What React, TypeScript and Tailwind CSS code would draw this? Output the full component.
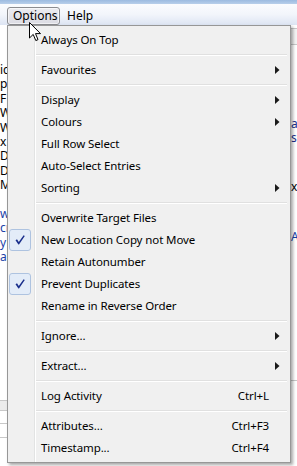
import React from "react";

type Item =
  | { kind: "sep" }
  | { kind: "item"; label: string; checked?: boolean; sub?: boolean; shortcut?: string };

const items: Item[] = [
  { kind: "item", label: "Always On Top" },
  { kind: "sep" },
  { kind: "item", label: "Favourites", sub: true },
  { kind: "sep" },
  { kind: "item", label: "Display", sub: true },
  { kind: "item", label: "Colours", sub: true },
  { kind: "item", label: "Full Row Select" },
  { kind: "item", label: "Auto-Select Entries" },
  { kind: "item", label: "Sorting", sub: true },
  { kind: "sep" },
  { kind: "item", label: "Overwrite Target Files" },
  { kind: "item", label: "New Location Copy not Move", checked: true },
  { kind: "item", label: "Retain Autonumber" },
  { kind: "item", label: "Prevent Duplicates", checked: true },
  { kind: "item", label: "Rename in Reverse Order" },
  { kind: "sep" },
  { kind: "item", label: "Ignore...", sub: true },
  { kind: "sep" },
  { kind: "item", label: "Extract...", sub: true },
  { kind: "sep" },
  { kind: "item", label: "Log Activity", shortcut: "Ctrl+L" },
  { kind: "sep" },
  { kind: "item", label: "Attributes...", shortcut: "Ctrl+F3" },
  { kind: "item", label: "Timestamp...", shortcut: "Ctrl+F4" },
];

// slivers of the file list peeking out left of the menu
const leftLines = [
  { t: "ic", c: "text-black" },
  { t: "p", c: "text-black" },
  { t: "F", c: "text-black" },
  { t: "W", c: "text-black" },
  { t: "W", c: "text-black" },
  { t: "x", c: "text-black" },
  { t: "D", c: "text-black" },
  { t: "D", c: "text-black" },
  { t: "M", c: "text-black" },
  { t: "", c: "text-black" },
  { t: "w", c: "text-[#1a3fa8]" },
  { t: "cr", c: "text-[#1a3fa8]" },
  { t: "y", c: "text-[#1a3fa8]" },
  { t: "ah", c: "text-[#1a3fa8]" },
];

function Check() {
  return (
    <div className="flex h-[22px] w-[22px] items-center justify-center rounded-[3px] border border-[#aec3e0] bg-[#e3ecf8]">
      <svg width="12" height="12" viewBox="0 0 12 12">
        <path d="M1.5 6.2 L3 5.2 L4.8 8 L9.6 1.2 L10.8 2 L5 10.6 L4.4 10.6 Z" fill="#1a2f8c" />
      </svg>
    </div>
  );
}

function Arrow() {
  return (
    <svg width="5" height="8" viewBox="0 0 5 8">
      <path d="M0 0 L4.5 4 L0 8 Z" fill="#1a1a1a" />
    </svg>
  );
}

function MenuRow({ item }: { item: Item }) {
  if (item.kind === "sep") {
    return (
      <div className="flex h-[8px]">
        <div className="w-[27px]" />
        <div className="mr-[2px] flex flex-1 flex-col pt-[3px]">
          <div className="h-px bg-[#e0e0e0]" />
          <div className="h-px bg-white" />
        </div>
      </div>
    );
  }
  return (
    <div className="flex h-[22px] items-center">
      <div className="flex w-[25px] items-center">{item.checked && <Check />}</div>
      <div className="w-[2px]" />
      <div className="flex-1 pl-[5px] text-[11.5px] tracking-[-0.1px] text-black">{item.label}</div>
      {item.shortcut && (
        <div className="text-[11.5px] tracking-[-0.1px] text-black">{item.shortcut}</div>
      )}
      <div className="flex w-[20px] items-center pl-[6px]">{item.sub && <Arrow />}</div>
    </div>
  );
}

export default function App() {
  return (
    <div
      className="relative h-[466px] w-[297px] overflow-hidden bg-white"
      style={{ fontFamily: '"Noto Sans", "Open Sans", sans-serif' }}
    >
      <div className="h-[4px] bg-gradient-to-b from-[#9cbbe0] to-[#b8cfea]" />
      <div className="flex h-[21px] items-start bg-gradient-to-b from-[#fbfcfe] via-[#f2f5fb] to-[#dde5f3] pl-[7px] pt-[3px] text-[12px] text-black">
        <div className="flex h-[18px] w-[53px] items-center rounded-[3px] border border-[#8b8c90] bg-gradient-to-b from-[#ececf0] to-[#dcdce3] pl-[5px] shadow-[inset_0_0_0_1px_rgba(255,255,255,0.6)]">
          Options
        </div>
        <div className="ml-[7px] flex h-[18px] items-center">Help</div>
      </div>

      {/* window content behind the menu */}
      <div className="flex h-[441px]">
        <div className="flex w-[7px] flex-col overflow-hidden whitespace-nowrap pt-[38px] text-[12px] leading-[14px]">
          {leftLines.map((l, i) => (
            <div key={i} className={`h-[14.4px] ${l.c}`}>
              {l.t}
            </div>
          ))}
          <div className="mt-[136px] h-[11px] border-y border-[#c8c8c8] bg-[#ececec]" />
          <div className="mt-[12px] h-px bg-[#c8c8c8]" />
          <div className="mt-[13px] h-px bg-[#c8c8c8]" />
        </div>
        <div className="flex-1" />
        <div className="flex w-[6px] flex-col overflow-hidden whitespace-nowrap text-[12px] leading-[14px]">
          <div className="mt-[3px] h-[17px] border-y border-[#c8c8c8] bg-[#f3f3f3]" />
          <div className="mt-[72px] text-[#1a2f8c]">as</div>
          <div className="text-[#1a2f8c]">sh</div>
          <div className="mt-[35px] text-black">x</div>
          <div className="mt-[36px] text-[#1a3fa8]">A</div>
          <div className="mt-[136px] h-px bg-[#c8c8c8]" />
        </div>
      </div>

      {/* Options drop-down */}
      <div className="absolute left-[7px] top-[25px] w-[284px] border border-[#979797] bg-[#f0f0f0] py-[3px] pl-px pr-px shadow-[2px_2px_3px_rgba(0,0,0,0.35)]">
        <div className="absolute bottom-0 left-[26px] top-0 w-[2px] border-l border-[#e2e3e3] bg-white" />
        <div className="relative flex flex-col">
          {items.map((it, i) => (
            <MenuRow key={i} item={it} />
          ))}
        </div>
      </div>

      {/* mouse pointer */}
      <svg className="absolute left-[29px] top-[22px]" width="13" height="20" viewBox="0 0 13 20">
        <path
          d="M0.5 0.5 L0.5 16 L4.2 12.4 L6.8 18.6 L9 17.6 L6.5 11.6 L11.5 11.6 Z"
          fill="white"
          stroke="black"
          strokeWidth="1"
          strokeLinejoin="round"
        />
      </svg>
    </div>
  );
}
